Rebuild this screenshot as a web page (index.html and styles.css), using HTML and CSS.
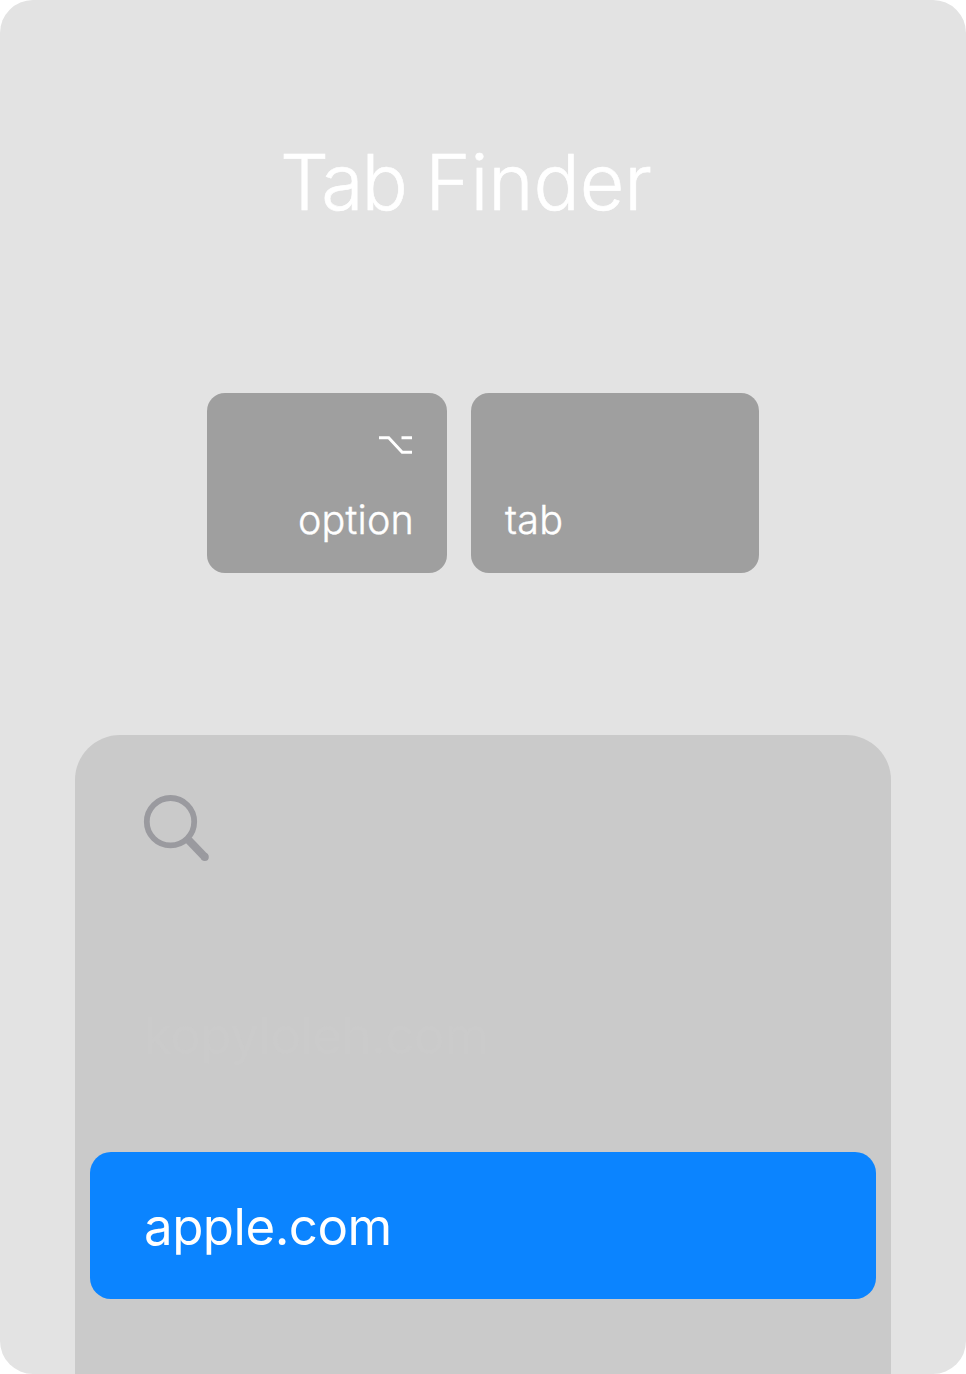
FILE: index.html
```html
<!DOCTYPE html>
<html lang="en">
<head>
<meta charset="utf-8">
<title>Tab Finder</title>
<link rel="stylesheet" href="styles.css">
</head>
<body>
<main class="card">
  <h1 class="title"><span class="title-tight">Tab </span>Finder</h1>
  <div class="keys">
    <div class="key key-option">
      <svg class="option-icon" width="34" height="20" viewBox="0 0 34 20" fill="none" stroke="#fff" stroke-width="3"><path d="M0 2.7H9.7L23.2 17.2H33M22.5 2.7H33"/></svg>
      <span class="key-label option-label">option</span>
    </div>
    <div class="key key-tab"><span class="key-label tab-label">tab</span></div>
  </div>
  <section class="panel">
    <div class="search">
      <svg width="68" height="68" viewBox="0 0 68 68" fill="none" stroke="#9a9a9f"><circle cx="27.5" cy="27.7" r="23.7" stroke-width="5.8"/><path d="M45.5 46L61.8 63" stroke-width="8"/><circle cx="61.8" cy="63" r="4" fill="#9a9a9f" stroke="none"/></svg>
    </div>
    <div class="row faded"><span class="row-text">kopyloleh.com</span></div>
    <div class="row selected"><span class="row-text">apple.com</span></div>
  </section>
</main>
</body>
</html>
```

FILE: styles.css
```css
* { box-sizing: border-box; }
body { margin: 0; background: #fff; font-family: Inter, "Liberation Sans", sans-serif; color: #fff; }
.card { display: flex; flex-direction: column; align-items: center; width: 966px; height: 1374px; border-radius: 33px; background: #e3e3e3; overflow: hidden; }
.title { align-self: flex-start; margin: 135px 0 0 280px; font-size: 77px; line-height: 94px; font-weight: 300; letter-spacing: -0.1px; white-space: nowrap; -webkit-text-stroke: 0.6px #fff; }
.title-tight { letter-spacing: -2.1px; }
.keys { display: flex; gap: 24px; margin-top: 164px; }
.key { display: flex; flex-direction: column; height: 180px; border-radius: 18px; background: #9f9f9f; }
.key-option { width: 240px; align-items: flex-end; padding: 42px 34px 0 0; }
.option-icon { display: block; }
.key-tab { width: 288px; padding: 104px 0 0 34px; }
.key-label { font-size: 39.5px; line-height: 46px; font-weight: 300; letter-spacing: 0.2px; -webkit-text-stroke: 0.4px #fff; }
.option-label { margin: 42px -1px 0 0; }
.panel { width: 816px; height: 639px; margin-top: 162px; padding: 59px 15px 0; border-radius: 45px 45px 0 0; background: #cacaca; }
.search { display: flex; height: 167px; padding-left: 53px; }
.row { display: flex; align-items: center; height: 147px; padding: 2px 0 0 54px; border-radius: 21px; font-size: 51px; line-height: 62px; letter-spacing: -0.5px; }
.faded { margin-bottom: 44px; color: #cbcbcb; }
.selected { background: #0b84ff; }
```
